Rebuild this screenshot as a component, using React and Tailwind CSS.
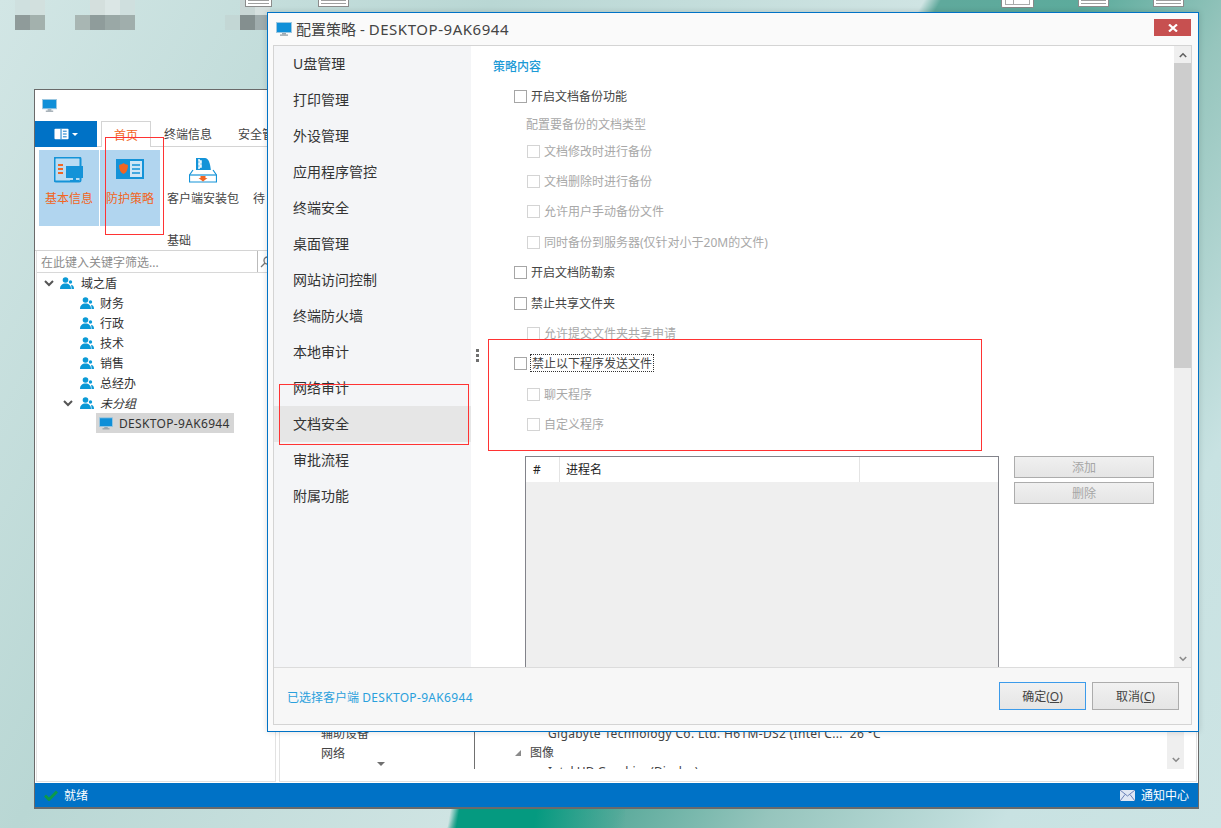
const FONT = "font-['Noto_Sans','Noto_Sans_CJK_SC',sans-serif]";

const Monitor = ({ className }) => (
  <svg viewBox="0 0 16 14" className={className}>
    <rect x="0.5" y="0.5" width="15" height="10" fill="#0f8fd8" stroke="#9cc7e0" strokeWidth="1" />
    <rect x="6" y="11" width="4" height="1.5" fill="#9aa7b0" />
    <rect x="4" y="12.5" width="8" height="1.2" fill="#8a97a0" />
  </svg>
);

const UserGroup = ({ className }) => (
  <svg viewBox="0 0 14 13" className={className} fill="#0b9ad6">
    <circle cx="5.5" cy="3" r="2.8" />
    <path d="M0 12c0-3.4 2.2-5.4 5.5-5.4S11 8.600 11 12z" />
    <circle cx="10.500" cy="5" r="1.700" />
    <path d="M11.500 12h2.500c0-2.500-1-4-3-4.200 0.400 1.200 0.600 2.600 0.500 4.200z" />
  </svg>
);

const Chevron = ({ className, up }) => (
  <svg viewBox="0 0 10 7" className={className} fill="none" stroke="currentColor" strokeWidth="2">
    <path d={up ? 'M1 6l4-4 4 4' : 'M1 1l4 4 4-4'} />
  </svg>
);

const Checkbox = ({ disabled }) => (
  <span className={`block w-[13px] h-[13px] shrink-0 bg-white border ${disabled ? 'border-[#d4d4d4]' : 'border-[#a6a6a6]'}`} />
);

const DesktopDoc = ({ className }) => (
  <div className={`absolute top-0 h-[7px] bg-white border border-t-0 border-[#8c8c8c] flex flex-col gap-[2px] px-[2px] ${className}`}>
    <span className="h-px bg-[#a0a0a0]" />
    <span className="h-px bg-[#a0a0a0]" />
  </div>
);

const menuItems = ['U盘管理', '打印管理', '外设管理', '应用程序管控', '终端安全', '桌面管理', '网站访问控制', '终端防火墙', '本地审计', '网络审计', '文档安全', '审批流程', '附属功能'];

const policyRows = [
  { text: '开启文档备份功能', h: 'h-[30px]', pl: 'pl-[43px]', box: true },
  { text: '配置要备份的文档类型', h: 'h-[26px]', pl: 'pl-[55px]', muted: true },
  { text: '文档修改时进行备份', h: 'h-[28px]', pl: 'pl-[56px]', box: true, muted: true },
  { text: '文档删除时进行备份', h: 'h-[32px]', pl: 'pl-[56px]', box: true, muted: true },
  { text: '允许用户手动备份文件', h: 'h-[28px]', pl: 'pl-[56px]', box: true, muted: true },
  { text: '同时备份到服务器(仅针对小于20M的文件)', h: 'h-[34px]', pl: 'pl-[56px]', box: true, muted: true },
  { text: '开启文档防勒索', h: 'h-[26px]', pl: 'pl-[43px]', box: true },
  { text: '禁止共享文件夹', h: 'h-[36px]', pl: 'pl-[43px]', box: true },
  { text: '允许提交文件夹共享申请', h: 'h-[24px]', pl: 'pl-[56px]', box: true, muted: true },
  { text: '禁止以下程序发送文件', h: 'h-[36px]', pl: 'pl-[43px]', box: true, focus: true },
  { text: '聊天程序', h: 'h-[26px]', pl: 'pl-[56px]', box: true, muted: true },
  { text: '自定义程序', h: 'h-[34px]', pl: 'pl-[56px]', box: true, muted: true },
];

const treeRows = [
  { text: '域之盾', pl: 'pl-[7px]', arrow: 'mr-[6px]', gap: 'ml-[7px]' },
  { text: '财务', pl: 'pl-[43px]', gap: 'ml-[6px]' },
  { text: '行政', pl: 'pl-[43px]', gap: 'ml-[6px]' },
  { text: '技术', pl: 'pl-[43px]', gap: 'ml-[6px]' },
  { text: '销售', pl: 'pl-[43px]', gap: 'ml-[6px]' },
  { text: '总经办', pl: 'pl-[43px]', gap: 'ml-[6px]' },
  { text: '未分组', pl: 'pl-[26px]', arrow: 'mr-[7px]', gap: 'ml-[6px]', italic: true },
];

function PolicyDialog() {
  return (
    <div className="absolute left-[267px] top-[12px] w-[932px] h-[720px] flex flex-col bg-[#fafafa] border border-[#0072c6] shadow-[0_0_6px_rgba(0,0,0,0.15)]">
      <div className="h-[32px] shrink-0 flex items-center pl-[8px] pr-[7px]">
        <Monitor className="w-[16px] h-[14px]" />
        <span className="ml-[4px] text-[15px] text-[#444]">
          配置策略 - <span className="tracking-[0.55px]">DESKTOP-9AK6944</span>
        </span>
        <div className="ml-auto w-[37px] h-[17px] -mt-[3px] bg-[#c75050] flex items-center justify-center">
          <svg viewBox="0 0 10 8" className="w-[10px] h-[8px]" stroke="white" strokeWidth="2.200">
            <path d="M1 0.500l8 7M9 0.500l-8 7" />
          </svg>
        </div>
      </div>

      <div className="flex-1 ml-[5px] mr-[6px] mb-[6px] flex flex-col border border-[#d4d4d4] min-h-0">
        <div className="flex-1 flex min-h-0 relative">
          <div className="w-[197px] shrink-0 bg-[#f4f5f7]">
            {menuItems.map((item) => (
              <div
                key={item}
                className={`h-[36px] pl-[19px] pb-[2px] flex items-center text-[14px] text-[#333] ${item === '文档安全' ? 'bg-[#e6e6e6]' : ''}`}
              >
                {item}
              </div>
            ))}
          </div>

          <div className="flex-1 min-w-0 bg-white overflow-hidden">
            <div className="h-[35px] pt-[13px] pl-[22px] text-[12px] leading-[16px] font-medium text-[#1c9ad6]">策略内容</div>
            {policyRows.map((row) => (
              <div key={row.text} className={`${row.h} ${row.pl} flex items-center text-[12px] ${row.muted ? 'text-[#a8a8a8]' : 'text-[#444]'}`}>
                {row.box && <Checkbox disabled={row.muted} />}
                {row.focus ? (
                  <span className="ml-[3px] px-px pt-[1px] border border-dotted border-[#333] leading-[15px]">{row.text}</span>
                ) : (
                  <span className={`block pt-[2px] ${row.box ? 'ml-[4px]' : ''}`}>{row.text}</span>
                )}
              </div>
            ))}

            <div className="mt-[15px] pl-[54px] flex gap-[15px]">
              <div className="w-[474px] h-[300px] shrink-0 border border-[#82838a] bg-[#efefef]">
                <div className="h-[25px] bg-white flex text-[12px] text-[#222]">
                  <div className="w-[34px] pl-[7px] flex items-center border-r border-[#e4e4e4]">#</div>
                  <div className="w-[300px] pl-[6px] flex items-center border-r border-[#e4e4e4]">进程名</div>
                </div>
              </div>
              <div className="w-[140px] flex flex-col gap-[4px]">
                {['添加', '删除'].map((label) => (
                  <div key={label} className="h-[22px] pt-[2px] flex items-center justify-center text-[12px] text-[#a6a6a6] border border-[#acacac] bg-[linear-gradient(#f0f0f0,#e5e5e5)]">
                    {label}
                  </div>
                ))}
              </div>
            </div>
          </div>

          <div className="w-[17px] shrink-0 bg-[#efefef] flex flex-col">
            <div className="h-[17px] flex items-center justify-center text-[#606060]">
              <Chevron className="w-[8px] h-[6px]" up />
            </div>
            <div className="h-[305px] bg-[#cdcdcd]" />
            <div className="mt-auto h-[17px] flex items-center justify-center text-[#8a8a8a]">
              <Chevron className="w-[8px] h-[6px]" />
            </div>
          </div>

          {/* sidebar splitter grip */}
          <div className="absolute left-[202px] top-[303px] flex flex-col gap-[2px]">
            <span className="w-[3px] h-[3px] bg-[#707070]" />
            <span className="w-[3px] h-[3px] bg-[#707070]" />
            <span className="w-[3px] h-[3px] bg-[#707070]" />
          </div>
        </div>

        <div className="h-[57px] shrink-0 bg-[#f7f7f7] border-t border-[#dcdcdc] flex items-center pl-[13px] pr-[12px] text-[12px]">
          <span className="block pt-[3px] text-[#2aa0dc]">
            已选择客户端 <span className="tracking-[0.33px]">DESKTOP-9AK6944</span>
          </span>
          <div className="ml-auto flex gap-[6px] text-[#444]">
            <div className="w-[87px] h-[28px] pt-[2px] flex items-center justify-center border border-[#3c9bea] bg-[linear-gradient(#f1f1f1,#e5e5e5)]">
              确定(<span className="underline">O</span>)
            </div>
            <div className="w-[87px] h-[28px] pt-[2px] flex items-center justify-center border border-[#acacac] bg-[linear-gradient(#f1f1f1,#e5e5e5)]">
              取消(<span className="underline">C</span>)
            </div>
          </div>
        </div>
      </div>
    </div>
  );
}

function MainWindow() {
  return (
    <div className="absolute left-[34px] top-[89px] w-[1165px] h-[720px] flex flex-col bg-white border border-[#6a6a6a] border-b-2">
      <div className="h-[31px] shrink-0 pl-[7px] flex items-center">
        <Monitor className="w-[15px] h-[13px]" />
      </div>

      <div className="h-[26px] shrink-0 flex items-end text-[12px] text-[#444] border-b border-[#d4d4d4]">
        <div className="w-[62px] h-[26px] bg-[#0072c6] flex items-center justify-center gap-[3px] mb-[-1px]">
          <svg viewBox="0 0 16 12" className="w-[15px] h-[12px]">
            <rect x="0.500" y="0.500" width="15" height="11" rx="1" fill="white" />
            <path d="M7.500 0.500v11M9.500 3h4M9.500 6h4M9.500 9h4" stroke="#0072c6" strokeWidth="1" />
          </svg>
          <span className="w-0 h-0 border-x-[3px] border-x-transparent border-t-[3px] border-t-white" />
        </div>
        <div className="ml-[4px] w-[50px] h-[26px] mb-[-1px] pt-[3px] flex items-center justify-center bg-white border border-b-0 border-[#d4d4d4] text-[#f26522]">首页</div>
        <div className="ml-[13px] h-[26px] pt-[3px] flex items-center">终端信息</div>
        <div className="ml-[26px] h-[26px] pt-[3px] flex items-center">安全管理</div>
      </div>

      <div className="h-[104px] shrink-0 flex pl-[4px] pt-[3px] border-b border-[#d4d4d4] text-[12px]">
        <div className="w-[60px] h-[76px] bg-[#b1d5ef] flex flex-col items-center pt-[7px] text-[#f26522]">
          <svg viewBox="0 0 30 26" className="w-[30px] h-[26px]">
            <rect x="0.500" y="0.500" width="26" height="24" rx="1.500" fill="#b9dcf3" stroke="#1493d8" strokeWidth="2" />
            <path d="M4 8h5M4 12h5M4 16h5" stroke="#f26522" strokeWidth="2" />
            <rect x="12" y="9" width="17" height="12" fill="#1493d8" />
            <path d="M19 21h3v2h3v2h-9v-2h3z" fill="#1493d8" />
          </svg>
          <span className="mt-[7px]">基本信息</span>
        </div>
        <div className="ml-px w-[60px] h-[76px] bg-[#b1d5ef] flex flex-col items-center pt-[9px] text-[#f26522]">
          <svg viewBox="0 0 28 20" className="w-[28px] h-[20px]">
            <rect width="28" height="20" fill="#1493d8" />
            <path d="M3 6q4-1 4.500-2 0.500 1 4.500 2 0 7-4.500 9-4.500-2-4.500-9z" fill="#f26522" />
            <rect x="14" y="2" width="12" height="16" fill="#cfe6f6" />
            <path d="M16 6h8M16 10h8M16 14h8" stroke="#1493d8" strokeWidth="1.500" />
          </svg>
          <span className="mt-[11px]">防护策略</span>
        </div>
        <div className="ml-[6px] relative w-[74px] flex flex-col items-center pt-[7px] text-[#444]">
          <svg viewBox="0 0 28 26" className="w-[28px] h-[26px]">
            <path d="M7 15V1h9q5 0 6 14z" fill="#1493d8" />
            <path d="M10 2v2h2v2h-2v2h2v2h-2v2" stroke="white" strokeWidth="1.500" fill="none" />
            <path d="M4 13L0.500 18v7h27v-7L24 13" fill="white" stroke="#1493d8" strokeWidth="1.200" />
            <path d="M0.500 18h27" stroke="#1493d8" strokeWidth="1.200" />
            <path d="M11.500 19h5v2h2l-4.500 3.500-4.500-3.500h2z" fill="#f26522" />
          </svg>
          <span className="mt-[7px] whitespace-nowrap">客户端安装包</span>
          <span className="absolute top-[82px] left-[1px]">基础</span>
        </div>
        <div className="ml-[13px] pt-[40px] text-[#444]">待</div>
      </div>

      <div className="flex-1 min-h-0 flex gap-[3px] px-px pb-px">
        <div className="w-[240px] shrink-0 flex flex-col border-x border-b border-[#e2e2e2]">
          <div className="h-[22px] shrink-0 flex border-b border-[#d8d8d8] text-[12px] text-[#8c8c8c]">
            <div className="flex-1 pl-[4px] pt-[2px] flex items-center border-r border-[#bbb]">在此键入关键字筛选...</div>
            <div className="w-[17px] flex items-center pl-[2px] text-[#777]">
              <svg viewBox="0 0 12 12" className="w-[12px] h-[12px]" fill="none" stroke="currentColor" strokeWidth="1.300">
                <circle cx="7.500" cy="4.500" r="3.500" />
                <path d="M5 7l-4 4" />
              </svg>
            </div>
          </div>
          <div className="text-[12px] text-[#333]">
            {treeRows.map((row) => (
              <div key={row.text} className={`h-[20px] flex items-center ${row.pl}`}>
                {row.arrow && <Chevron className={`w-[10px] h-[7px] text-[#555] ${row.arrow}`} />}
                <UserGroup className="w-[14px] h-[13px]" />
                <span className={`block pt-[2px] ${row.gap} ${row.italic ? 'italic' : ''}`}>{row.text}</span>
              </div>
            ))}
            <div className="pl-[59px] h-[20px]">
              <div className="w-[138px] h-[20px] pl-[3px] bg-[#d6d6d6] flex items-center">
                <Monitor className="w-[14px] h-[13px]" />
                <span className="block pt-[2px] ml-[6px] tracking-[0.33px]">DESKTOP-9AK6944</span>
              </div>
            </div>
          </div>
        </div>

        <div className="flex-1 min-w-0 flex flex-col justify-end border-x border-b border-[#e2e2e2] text-[12px] text-[#444]">
          <div className="h-[49px] mb-[12px] flex overflow-hidden">
            <div className="w-[195px] shrink-0 relative pl-[41px] pt-[4px] border-r border-[#707070]">
              <div className="h-[20px] flex items-center">辅助设备</div>
              <div className="h-[20px] flex items-center">网络</div>
              <span className="absolute left-[97px] top-[42px] w-0 h-0 border-x-[4px] border-x-transparent border-t-[4px] border-t-[#707070]" />
            </div>
            <div className="flex-1 min-w-0 pl-[73px] pt-[4px] whitespace-nowrap">
              <div className="h-[20px] flex items-center tracking-[0.33px]">Gigabyte Technology Co. Ltd. H61M-DS2 (Intel C...&nbsp;&nbsp;26 °C</div>
              <div className="h-[18px] flex items-center -ml-[33px]">
                <svg viewBox="0 0 6 6" className="w-[6px] h-[6px] mr-[9px]"><path d="M6 0v6H0z" fill="#8a8a8a" /></svg>
                图像
              </div>
              <div className="h-[20px] flex items-center">Intel HD Graphics (Display)</div>
            </div>
            <div className="w-[17px] mr-[12px] shrink-0 bg-[#efefef] flex items-end justify-center pb-[6px] text-[#8a8a8a]">
              <Chevron className="w-[8px] h-[6px]" />
            </div>
          </div>
        </div>
      </div>

      <div className="h-[24px] shrink-0 bg-[#0072c6] flex items-center pl-[9px] pr-[9px] text-[12px] text-white">
        <svg viewBox="0 0 14 11" className="w-[14px] h-[11px]">
          <path d="M1 5.500l4 4 8-8" fill="none" stroke="#0c9a4a" strokeWidth="3" />
        </svg>
        <span className="block pt-[2px] ml-[6px]">就绪</span>
        <div className="ml-auto flex items-center gap-[6px]">
          <svg viewBox="0 0 15 11" className="w-[15px] h-[11px]">
            <rect width="15" height="11" fill="#dfe6f4" />
            <path d="M0 0l7.500 6L15 0M0 11l5-6.500M15 11l-5-6.500" fill="none" stroke="#6a80b8" strokeWidth="1" />
          </svg>
          <span className="block pt-[2px]">通知中心</span>
        </div>
      </div>
    </div>
  );
}

export default function App() {
  return (
    <div className={`relative w-[1221px] h-[828px] overflow-hidden ${FONT} bg-[linear-gradient(120deg,#d2e6e5_0%,#b9d7d4_29%,#cfe4e3_54.4%,#5fa99c_55.4%,#5cab9c_64%,#96c5bd_73%,#c8e2e2_87%,#cde4e4_100%)]`}>
      {/* blurred desktop icons */}
      <div className="absolute left-[15px] top-0 w-[30px] flex flex-wrap">
        <span className="w-[15px] h-[15px] bg-[#cfe0df]" />
        <span className="w-[15px] h-[15px] bg-[#d2e0de]" />
        <span className="w-[15px] h-[15px] bg-[#8f9b9a]" />
        <span className="w-[15px] h-[15px] bg-[#a3b1ad]" />
      </div>
      <div className="absolute left-[75px] top-0 w-[60px] flex flex-wrap">
        <span className="w-[15px] h-[15px]" />
        <span className="w-[15px] h-[15px] bg-[#d4dfdd]" />
        <span className="w-[15px] h-[15px] bg-[#dbe6e5]" />
        <span className="w-[15px] h-[15px] bg-[#cfdfde]" />
        <span className="w-[15px] h-[15px] bg-[#a8b6b3]" />
        <span className="w-[15px] h-[15px] bg-[#8f9c9b]" />
        <span className="w-[15px] h-[15px] bg-[#9aa8a6]" />
        <span className="w-[15px] h-[15px] bg-[#a0aeac]" />
      </div>
      <div className="absolute left-[225px] top-0 w-[45px] flex flex-wrap">
        <span className="w-[15px] h-[15px]" />
        <span className="w-[15px] h-[15px] bg-[#c9d6d5]" />
        <span className="w-[15px] h-[15px] bg-[#d6e0df]" />
        <span className="w-[15px] h-[15px] bg-[#c3d7d5]" />
        <span className="w-[15px] h-[15px] bg-[#848f8f]" />
        <span className="w-[15px] h-[15px] bg-[#a0acad]" />
      </div>

      {/* desktop files peeking over the top */}
      <DesktopDoc className="left-[245px] w-[27px]" />
      <DesktopDoc className="left-[318px] w-[31px]" />
      <div className="absolute left-[1001px] top-0 w-[33px] h-[8px] bg-white border border-t-0 border-[#888] rounded-b-[2px] flex flex-col px-[3px]">
        <div className="h-[3px] flex-1 flex border-x border-b border-[#aaa]">
          <span className="w-1/3 border-r border-[#aaa]" />
        </div>
        <span className="h-[2px]" />
      </div>
      <DesktopDoc className="left-[1078px] w-[31px]" />
      <DesktopDoc className="left-[1153px] w-[31px]" />

      {/* strongest green where the wallpaper band meets the bottom edge */}
      <div className="absolute left-[445px] top-[809px] w-[180px] h-[19px] bg-[linear-gradient(100deg,transparent_0%,transparent_3%,#059a80_8%,#059a80_50%,rgba(5,154,128,0)_100%)]" />

      <MainWindow />
      <PolicyDialog />

      {/* red annotation boxes */}
      <div className="absolute left-[105px] top-[137px] w-[59px] h-[98px] border border-[#f33]" />
      <div className="absolute left-[279px] top-[384px] w-[190px] h-[61px] border border-[#f33]" />
      <div className="absolute left-[488px] top-[339px] w-[494px] h-[112px] border border-[#f33]" />
    </div>
  );
}
